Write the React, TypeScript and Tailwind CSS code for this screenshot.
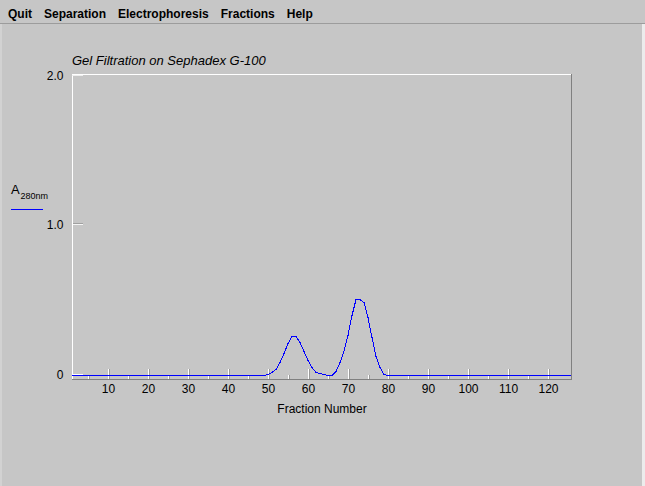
import React from "react";

const MENU = ["Quit", "Separation", "Electrophoresis", "Fractions", "Help"];

// A280 readings by fraction number, anything not listed sits on the baseline
const READINGS: Record<number, number> = {
  50: 0.004, 51: 0.018, 52: 0.04, 53: 0.087, 54: 0.147, 55: 0.213, 56: 0.257, 57: 0.26,
  58: 0.22, 59: 0.16, 60: 0.1, 61: 0.053, 62: 0.023, 63: 0.015, 64: 0.005,
  67: 0.03, 68: 0.088, 69: 0.16, 70: 0.265, 71: 0.397, 72: 0.51, 73: 0.51, 74: 0.487,
  75: 0.39, 76: 0.255, 77: 0.128, 78: 0.055, 79: 0.005,
};

const fx = (f: number) => 68 + 4 * f;
const vy = (v: number) => 375 - 150 * v;

const curve = (() => {
  const pts: string[] = [];
  for (let f = 1; f <= 125; f++) {
    pts.push(`${fx(f)},${(Math.round(vy(READINGS[f] ?? 0)) + 0.5).toFixed(1)}`);
  }
  pts.push(`571,375.5`);
  return pts.join(" ");
})();

const MAJOR = Array.from({ length: 12 }, (_, i) => (i + 1) * 10);
const MINOR = Array.from({ length: 12 }, (_, i) => i * 10 + 5);

const Chart: React.FC = () => (
  <svg
    width={640}
    height={418}
    viewBox="2 68 640 418"
    className="block"
    style={{ fontFamily: '"Liberation Sans", Arial, sans-serif' }}
  >
    {/* frame */}
    <g shapeRendering="crispEdges">
      <rect x={72} y={74} width={500} height={1} fill="#ffffff" />
      <rect x={72} y={74} width={1} height={306} fill="#ffffff" />
      <rect x={571} y={74} width={1} height={306} fill="#808080" />
      <rect x={72} y={379} width={500} height={1} fill="#808080" />

      {/* y ticks */}
      <rect x={72} y={75} width={11} height={1} fill="#eeeeee" />
      <rect x={73} y={223} width={10} height={1} fill="#a0a0a0" />
      <rect x={73} y={224} width={10} height={1} fill="#f4f4f4" />
      <rect x={72} y={374} width={11} height={1} fill="#ffffff" />

      {/* x ticks */}
      {MAJOR.map((f) => (
        <g key={f}>
          <rect x={fx(f)} y={369} width={1} height={10} fill="#ffffff" />
          <rect x={fx(f) + 1} y={369} width={1} height={10} fill="#9a9a9a" />
        </g>
      ))}
      {MINOR.map((f) => (
        <g key={f}>
          <rect x={fx(f)} y={375} width={1} height={4} fill="#ffffff" />
          <rect x={fx(f) + 1} y={375} width={1} height={4} fill="#9a9a9a" />
        </g>
      ))}

      <polyline points={curve} fill="none" stroke="#0000ff" strokeWidth={1} />

      {/* A280 key line */}
      <rect x={11} y={209} width={32} height={1} fill="#0000ff" />
    </g>

    {/* y labels */}
    <g fontSize={12} fill="#000" textAnchor="end">
      <text x={63.5} y={79.5}>2.0</text>
      <text x={63.5} y={228.7}>1.0</text>
      <text x={63.5} y={379}>0</text>
    </g>

    <text x={11} y={194} fontSize={13} fill="#000">A</text>
    <text x={20.5} y={199} fontSize={9} fill="#000">280nm</text>

    {/* x labels */}
    <g fontSize={12} fill="#000" textAnchor="middle">
      {MAJOR.map((f) => (
        <text key={f} x={fx(f) + 0.5} y={393}>{f}</text>
      ))}
      <text x={322} y={413}>Fraction Number</text>
    </g>
  </svg>
);

export default function App() {
  return (
    <div
      className="w-[645px] h-[486px] flex flex-col bg-[#c6c6c6] text-black overflow-hidden"
      style={{ fontFamily: '"Liberation Sans", Arial, sans-serif' }}
    >
      <div className="h-[24px] shrink-0 flex items-start pt-[8px] pl-2 gap-[12px] border-b border-[#9c9c9c] text-[12px] font-bold leading-none">
        {MENU.map((m) => (
          <span key={m}>{m}</span>
        ))}
      </div>
      <div className="flex-1 flex flex-col border-l-2 border-l-[#d2d2d2] border-r-[3px] border-r-[#ececec]">
        <div className="pl-[70px] pt-[29px] text-[13px] italic leading-[15px]">
          Gel Filtration on Sephadex G-100
        </div>
        <Chart />
      </div>
    </div>
  );
}
